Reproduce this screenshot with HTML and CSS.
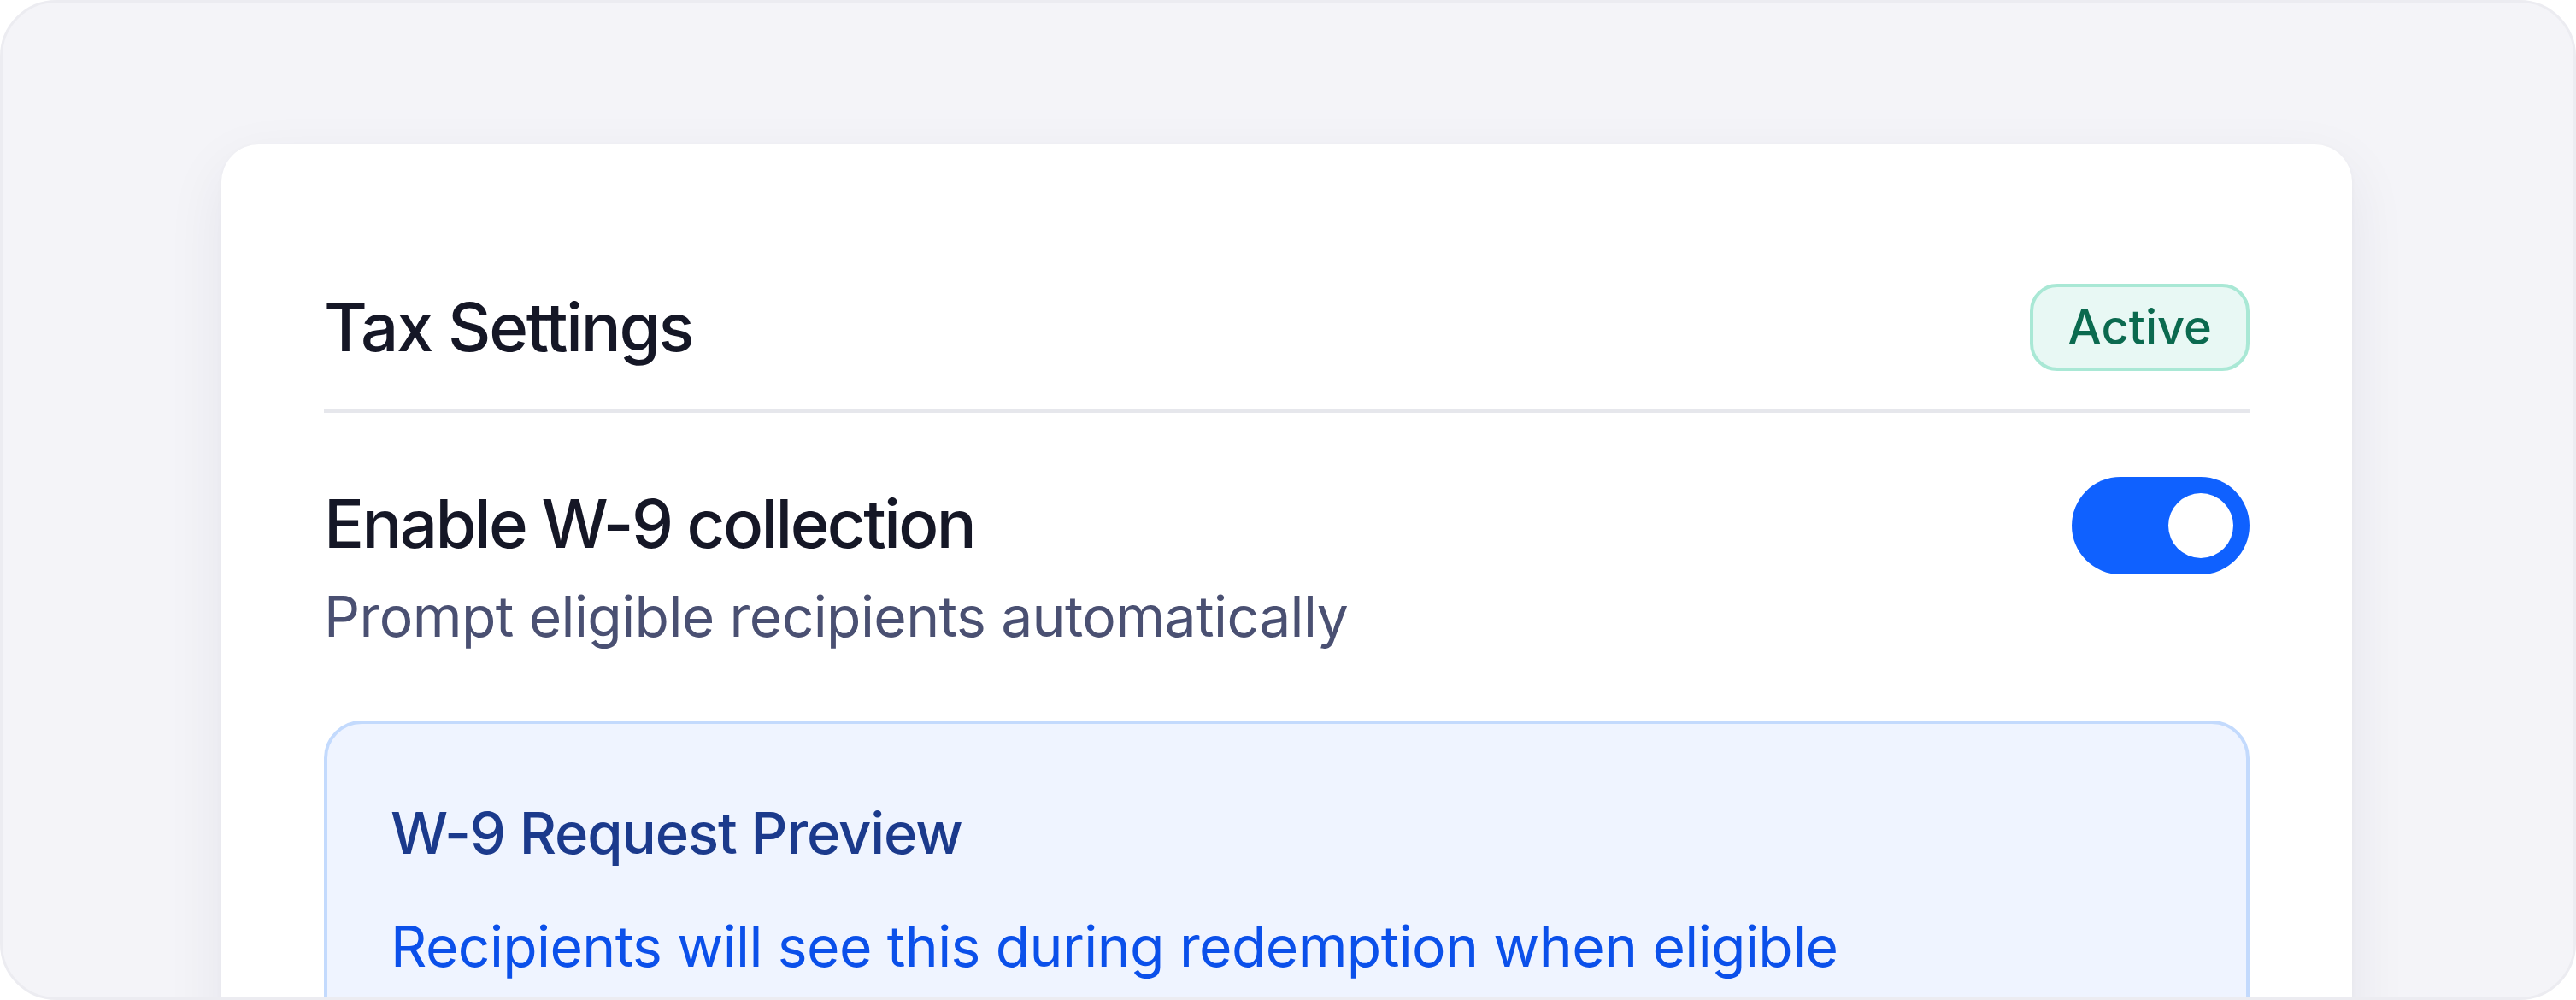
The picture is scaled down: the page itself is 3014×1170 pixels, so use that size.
FILE: index.html
```html
<!DOCTYPE html>
<html lang="en">
<head>
<meta charset="utf-8">
<title>Tax Settings</title>
<link rel="stylesheet" href="styles.css">
</head>
<body>
<div class="frame">
  <section class="card">
    <header class="card-header">
      <h1 class="card-title">Tax Settings</h1>
      <span class="badge">Active</span>
    </header>
    <div class="divider"></div>
    <div class="setting-row">
      <div class="setting-text">
        <div class="setting-label">Enable W-9 collection</div>
        <div class="setting-desc">Prompt eligible recipients automatically</div>
      </div>
      <div class="toggle is-on" role="switch" aria-checked="true"><span class="toggle-knob"></span></div>
    </div>
    <div class="preview">
      <div class="preview-title">W-9 Request Preview</div>
      <div class="preview-text">Recipients will see this during redemption when eligible</div>
    </div>
  </section>
</div>
</body>
</html>
```

FILE: styles.css
```css
html, body {
  margin: 0;
  padding: 0;
  background: #ffffff;
}

body {
  font-family: "Inter", "Noto Sans", "Liberation Sans", sans-serif;
  -webkit-font-smoothing: antialiased;
}

.frame {
  box-sizing: border-box;
  width: 100vw;
  height: 100vh;
  background: #f4f4f8;
  border: 3px solid #ececf1;
  border-radius: 66px;
  overflow: hidden;
  padding: 166px 259px 0 256px;
}

.card {
  box-sizing: border-box;
  min-height: 1100px;
  background: #ffffff;
  border-radius: 44px;
  padding: 163px 120px 0 120px;
  box-shadow: 0 24px 70px rgba(30, 30, 70, 0.07), 0 2px 6px rgba(30, 30, 70, 0.03);
}

.card-header {
  display: flex;
  align-items: center;
  justify-content: space-between;
}

.card-title {
  margin: 0;
  font-size: 78px;
  font-weight: 500;
  line-height: 100px;
  color: #151726;
  letter-spacing: -2.2px;
}

.badge {
  box-sizing: border-box;
  display: inline-block;
  font-size: 56px;
  font-weight: 500;
  line-height: 56px;
  padding: 19px 40px;
  color: #0b6a4f;
  background: #e8f8f4;
  border: 4px solid #a9e8d5;
  border-radius: 32px;
}

.divider {
  margin-top: 45px;
  height: 4px;
  background: #e6e7ec;
}

.setting-row {
  display: flex;
  align-items: flex-start;
  justify-content: space-between;
  margin-top: 72px;
}

.setting-label {
  font-size: 78px;
  font-weight: 500;
  line-height: 116px;
  color: #151726;
  letter-spacing: -2.6px;
}

.setting-desc {
  font-size: 66px;
  font-weight: 400;
  line-height: 100px;
  color: #4a5072;
  letter-spacing: -0.6px;
}

.toggle {
  box-sizing: border-box;
  display: flex;
  align-items: center;
  justify-content: flex-end;
  width: 208px;
  height: 114px;
  margin-top: 3px;
  padding: 0 19px;
  border-radius: 57px;
  background: #0f61ff;
}

.toggle-knob {
  width: 76px;
  height: 76px;
  border-radius: 50%;
  background: #ffffff;
}

.preview {
  margin-top: 72px;
  min-height: 400px;
  background: #eff4ff;
  border: 4px solid #c3dafd;
  border-radius: 44px;
  padding: 78px 74px;
}

.preview-title {
  font-size: 67px;
  font-weight: 500;
  line-height: 100px;
  color: #1b3a8c;
  letter-spacing: -1.1px;
}

.preview-text {
  margin-top: 32px;
  font-size: 66px;
  font-weight: 400;
  line-height: 100px;
  color: #0b50ea;
  letter-spacing: -0.6px;
}
```
